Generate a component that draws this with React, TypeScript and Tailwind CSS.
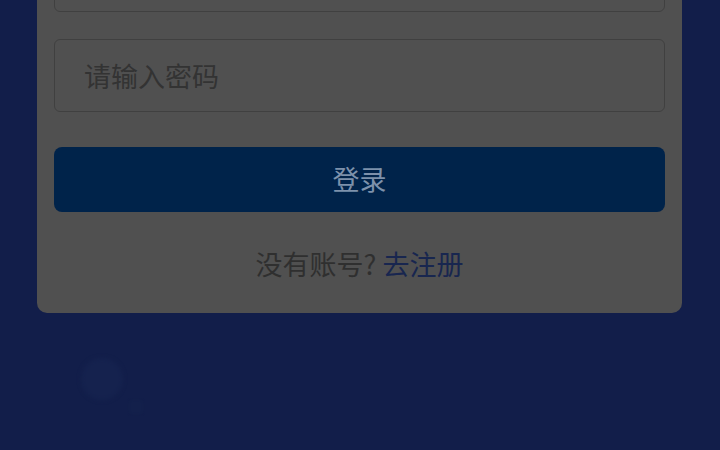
export default function App() {
  return (
    <div
      className="relative h-[450px] w-full overflow-hidden bg-[#121e4a] pl-[37px] pr-[38px]"
      style={{ fontFamily: '"Noto Sans CJK SC", "Noto Sans", sans-serif' }}
    >
      {/* login card, scrolled partly out of view */}
      <div className="mt-[-90px] flex flex-col rounded-[10px] bg-[#505050] px-[17px] pt-[29px] pb-[31px]">
        <input
          className="h-[73px] w-full rounded-[6px] border border-[#404040] bg-transparent px-[29px] text-[27px] text-[#2e2e2e] outline-none placeholder:text-[#333333]"
          placeholder="请输入账号"
        />
        <input
          type="password"
          className="mt-[27px] h-[73px] w-full rounded-[6px] border border-[#404040] bg-transparent px-[29px] text-[27px] text-[#2e2e2e] outline-none placeholder:text-[#333333]"
          placeholder="请输入密码"
        />
        <button className="mt-[35px] h-[65px] w-full rounded-[8px] bg-[#00234a] text-[27px] text-[#7d91ab]">
          登录
        </button>
        <p className="mt-[34px] text-center text-[27px] leading-[36px] text-[#2f2f2f]">
          没有账号? <span className="text-[#18264f]">去注册</span>
        </p>
      </div>

      {/* faint floating decoration */}
      <div className="absolute left-[81px] top-[358px] h-[42px] w-[42px] rounded-full bg-[#15224e] blur-[2px]" />
      <div className="absolute left-[129px] top-[400px] h-[14px] w-[14px] rounded-[3px] bg-[#13204b] blur-[1px]" />
    </div>
  );
}
